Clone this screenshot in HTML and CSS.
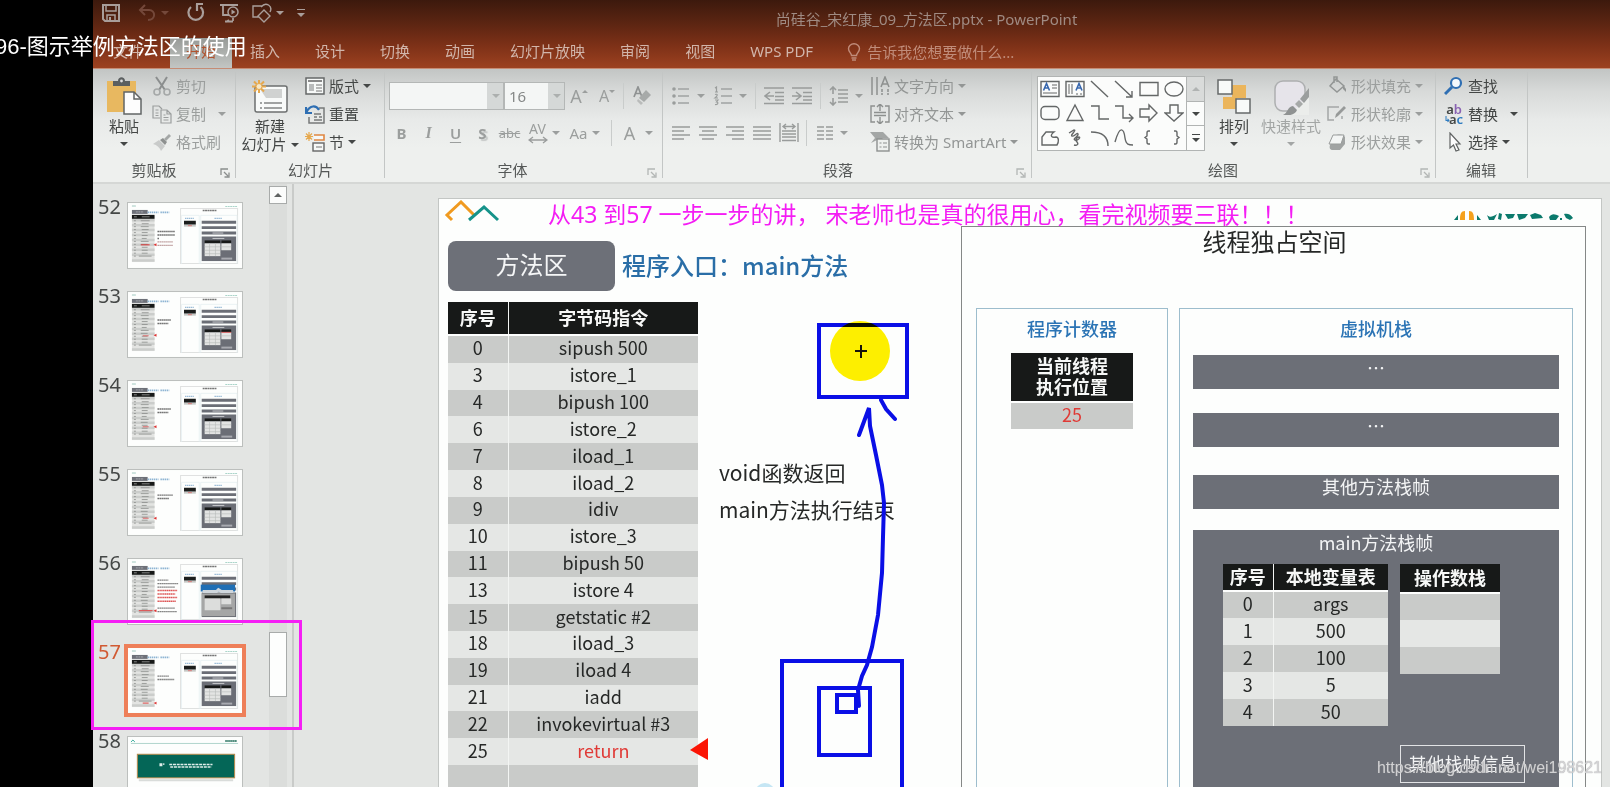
FILE: index.html
```html
<!DOCTYPE html>
<html lang="zh-CN">
<head>
<meta charset="utf-8">
<title>尚硅谷_宋红康_09_方法区.pptx - PowerPoint</title>
<link rel="stylesheet" href="styles.css">
</head>
<body>
<svg class="defs" aria-hidden="true">
  <symbol id="thumb" viewBox="0 0 116 66">
    <rect width="116" height="66" fill="#fdfefd"/>
    <path d="M4 3h4" stroke="#9fc9bf" stroke-width="1"/><path d="M99 3.500h12" stroke="#a9d4c9" stroke-width="1" stroke-dasharray="2 .5"/>
    <rect x="4" y="7" width="16" height="4" fill="#6d7078"/><path d="M8 9h8" stroke="#a5a7ac" stroke-dasharray="2 .6"/>
    <path d="M20 9.500h11m2 0h9" stroke="#8db4d3" stroke-width="1.600" stroke-dasharray="1.500 .6"/>
    <rect x="4" y="13" width="23" height="47" fill="#e3e4e2"/>
    <path d="M4 17.500h23M4 22.500h23M4 27.500h23M4 32.500h23M4 37.500h23M4 42.500h23M4 47.500h23M4 52.500h23M4 58.500h23" stroke="#cbcdcb" stroke-width="2.500"/>
    <rect x="4" y="12" width="23" height="4" fill="#171918"/><path d="M6 14h3m5 0h8" stroke="#888"/>
    <path d="M6 18h2m5 0h9M6 21h2m6 0h7M6 24h2m5 0h8M6 27h2m6 0h7M6 30h2m6 0h6M6 33h2m6 0h6M6 36h2m6 0h5M6 39h2m5 0h8M6 42h2m5 0h7M6 45h2m6 0h6M6 48h2m6 0h6M6 51h2m6 0h6M6 54h2m3 0h13" stroke="#8a8c8a" stroke-width=".8"/>
    <rect x="53.500" y="5.500" width="58" height="56" fill="none" stroke="#dfe1e0"/>
    <path d="M76 7.500h14" stroke="#777" stroke-width="1.600" stroke-dasharray="2 .4"/>
    <path d="M54.500 62V12.500h18V62M74 62V12.500h37V62" fill="none" stroke="#e2ecef" stroke-width=".7"/>
    <path d="M58 15.500h9M88 15.500h8" stroke="#7fa9cc" stroke-dasharray="1.500 .5"/>
    <rect x="57" y="18" width="12" height="4" fill="#1b1d1c"/><rect x="57" y="22" width="12" height="2" fill="#c6c8c6"/><path d="M61 23h4" stroke="#d66" stroke-width=".8"/>
    <path d="M75 19.500h35M75 25h35M75 30.500h35" stroke="#6b6e76" stroke-width="3"/><path d="M86 30.500h11" stroke="#c8c9cc"/>
    <rect x="75" y="34" width="35" height="25" fill="#6b6e76"/><path d="M86 36h12" stroke="#c8c9cc"/>
    <rect x="78" y="38" width="16" height="3" fill="#171918"/><rect x="78" y="41" width="16" height="13" fill="#e3e4e3"/>
    <rect x="95" y="38" width="10" height="3" fill="#171918"/><rect x="95" y="41" width="10" height="7" fill="#e3e4e3"/>
    <path d="M78 44.500h16M78 48h16M78 51.500h16M83 41v13M89 41v13M95 44.500h10" stroke="#b6b8b7" stroke-width=".6"/>
    <rect x="95" y="55.500" width="11" height="2" fill="#a8aab0"/>
  </symbol>
  <symbol id="launch" viewBox="0 0 10 10"><path d="M1 7V1h7M4 4l4 4M9 4.500V9H4.500" fill="none" stroke="currentColor" stroke-width="1.300"/></symbol>
</svg>

<div class="app">
  <header class="titlebar">
    <div class="quick">
      <button aria-label="保存"><svg viewBox="0 0 20 20"><path d="M2 2h16v16H4l-2-2z" fill="none" stroke="currentColor" stroke-width="2"/><path d="M5 2h10v6H5zM6 12h8v6H6z" fill="none" stroke="currentColor" stroke-width="1.500"/><path d="M8 14h2v4H8z" fill="currentColor"/></svg></button>
      <button class="dim" aria-label="撤消"><svg viewBox="0 0 20 20"><path d="M8 2L3 7l5 5M3 7h9c7 0 7 10-1 10" fill="none" stroke="currentColor" stroke-width="2"/></svg><i class="caret"></i></button>
      <button aria-label="重复"><svg viewBox="0 0 20 20"><path d="M5 4a7.300 7.300 0 1 0 9.500 0M10 1h7M11 1v7" fill="none" stroke="currentColor" stroke-width="2.200"/></svg></button>
      <button aria-label="放映"><svg viewBox="0 0 20 20"><path d="M1 2h18M4 2v10h6M10 17l-3 2M6 18.500h8M14 15v3" fill="none" stroke="currentColor" stroke-width="1.800"/><circle cx="14" cy="9" r="5" fill="none" stroke="currentColor" stroke-width="1.500"/><path d="M12.500 6.500l4 2.500-4 2.500z" fill="currentColor"/></svg></button>
      <button aria-label="形状"><svg viewBox="0 0 20 20"><path d="M7 14H1V3h9M12 7l6 6-6 6-6-6zM9 4c5-6 12-1 9 5" fill="none" stroke="currentColor" stroke-width="1.400"/></svg><i class="caret"></i></button>
      <button class="more" aria-label="自定义"><b></b><i class="caret"></i></button>
    </div>
    <h1>尚硅谷_宋红康_09_方法区.pptx - PowerPoint</h1>
    <nav class="tabs">
      <a href="#file" class="file">文件</a><a href="#home" class="on">开始</a><a href="#insert">插入</a><a href="#design">设计</a><a href="#trans">切换</a><a href="#anim">动画</a><a href="#show">幻灯片放映</a><a href="#review">审阅</a><a href="#view">视图</a><a href="#wps">WPS PDF</a>
      <button class="tell"><svg viewBox="0 0 14 18"><path d="M4.500 12.500C4.500 10 1.500 9 1.500 5.800a5.500 5 0 0 1 11 0c0 3.200-3 4.200-3 6.700zM4.500 15h5M5 17h4" fill="none" stroke="currentColor" stroke-width="1.400"/></svg>告诉我您想要做什么...</button>
    </nav>
  </header>

  <section class="ribbon">
    <div class="group g-clip">
      <div class="body">
        <button class="big"><svg viewBox="0 0 36 38"><path d="M1 4h29v31H1z" fill="#e8b860"/><path d="M7 9V4h5c0-5 7-5 7 0h5v5z" fill="#5b5f60"/><circle cx="15.500" cy="4" r="1.400" fill="#ddd"/><path d="M18 15h10l7 7v15H18z" fill="#fdfdfd" stroke="#626566" stroke-width="1.500"/><path d="M28 15v7h7" fill="none" stroke="#626566" stroke-width="1.500"/></svg><span>粘贴</span><i class="caret"></i></button>
        <div class="stack off">
          <button><svg viewBox="0 0 20 20"><path d="M4 1l9 13M15 1L7 14" fill="none" stroke="#8b8e8e" stroke-width="2"/><circle cx="5" cy="16" r="3" fill="none" stroke="#a5a8a8" stroke-width="1.600"/><circle cx="15" cy="16" r="3" fill="none" stroke="#a5a8a8" stroke-width="1.600"/></svg>剪切</button>
          <button class="wide"><svg viewBox="0 0 20 20"><path d="M8 14H1V2h6l3 3M9 6h6l4 4v9H9zM15 6v4h4M3.500 6h3M3.500 9h3M3.500 11.500h3M11.500 11h2M11.500 13.500h5M11.500 16h5" fill="none" stroke="#9b9e9e" stroke-width="1.200"/></svg>复制<i class="caret"></i></button>
          <button><svg viewBox="0 0 20 20"><path d="M1 12l6-4 6 6-4 5c-1-3-4-6-8-7z" fill="#c9cbca"/><path d="M8 8l3-2 4 4-2 3z" fill="#8e9190"/><path d="M12 7l5-5 2 2-5 5z" fill="#a4a7a6"/></svg>格式刷</button>
        </div>
      </div>
      <div class="label">剪贴板<button aria-label="剪贴板选项" class="launch"><svg><use href="#launch"/></svg></button></div>
    </div>

    <div class="group g-slides">
      <div class="body">
        <button class="big"><svg viewBox="0 0 36 38"><rect x="3" y="9" width="32" height="26" rx="2" fill="#f8faf9" stroke="#6c6f6f" stroke-width="1.500"/><path d="M8 12h22v9H14" fill="#d0d2d1"/><path d="M8 26h2m2 0h18M8 31h2m2 0h18" stroke="#828585" stroke-width="1.500"/><path d="M7 3v13M0 9.500h14M2 4.500l10 10M12 4.500l-10 10" stroke="#e6a84d" stroke-width="2"/><circle cx="7" cy="9.500" r="3" fill="#f5e8c9" stroke="#e6a84d"/></svg><span>新建<br>幻灯片<i class="caret"></i></span></button>
        <div class="stack">
          <button><svg viewBox="0 0 20 20"><path d="M1 2h18v16H1z" fill="#f7f9f8" stroke="#656868" stroke-width="1.500"/><path d="M3 5h14" stroke="#888" stroke-width="2"/><path d="M4 8h5v7H4z" fill="#b9bbbb"/><path d="M11 9h6M11 12h6M11 15h6" stroke="#777"/></svg>版式<i class="caret"></i></button>
          <button><svg viewBox="0 0 20 20"><path d="M14 4h5v15H4v-6M9 10h7M9 13h3M14 13h3M9 16h8" fill="none" stroke="#777a7a" stroke-width="1.500"/><path d="M1 3v6h6M1.500 8C5 1 11 1 14 6" fill="none" stroke="#2f6fb3" stroke-width="2.200"/></svg>重置</button>
          <button><svg viewBox="0 0 20 20"><path d="M9 3h10v5H9" fill="#f6f8f7" stroke="#e08642" stroke-width="1.600"/><rect x="8" y="11" width="11" height="8" fill="#f6f8f7" stroke="#666" stroke-width="1.400"/><path d="M11 15h6" stroke="#777"/><path d="M4 0v9M0 4.500h8M1 1.500l6 6M7 1.500l-6 6" stroke="#e6a84d" stroke-width="1.200"/></svg>节<i class="caret"></i></button>
        </div>
      </div>
      <div class="label">幻灯片</div>
    </div>

    <div class="group g-font">
      <div class="body rows off">
        <div class="row r-font">
          <label class="combo face"><select aria-label="字体"><option></option></select><i class="caret"></i></label>
          <label class="combo size"><select aria-label="字号"><option>16</option></select><i class="caret"></i></label>
          <button class="w28 grow-a" aria-label="增大字号">A<i class="up"></i></button>
          <button class="w28 shrink-a" aria-label="减小字号">A<i class="caret"></i></button>
          <hr>
          <button class="w28" aria-label="清除格式"><svg viewBox="0 0 20 20"><path d="M2 11L6 1l4 10M3.500 7.500h5" fill="none" stroke="#8f9292" stroke-width="1.700"/><path d="M7 12l7-8 5 5-7 7z" fill="#a7aaa9"/><path d="M6 13l5 4-2 2-4-4z" fill="#b9bbba"/></svg></button>
        </div>
        <div class="row r-style">
          <button class="w27"><b>B</b></button><button class="w27 ital">I</button><button class="w27 und">U</button><button class="w27 shad">S</button><button class="w27 strike">abc</button>
          <button class="w41"><span class="av">AV<svg viewBox="0 0 20 8"><path d="M5 1L1 4l4 3M15 1l4 3-4 3M1 4h18" fill="none" stroke="#9a9d9c" stroke-width="1.300"/></svg></span><i class="caret"></i></button>
          <button class="w41 aa">Aa<i class="caret"></i></button>
          <hr>
          <button class="w41 color">A<i class="caret"></i></button>
        </div>
      </div>
      <div class="label">字体<button aria-label="字体选项" class="launch"><svg><use href="#launch"/></svg></button></div>
    </div>

    <div class="group g-para">
      <div class="body off">
        <div class="rows">
          <div class="row gap8">
            <button aria-label="项目符号"><svg viewBox="0 0 20 20"><path d="M7 3h11M7 10h11M7 17h11" stroke="#a0a3a2" stroke-width="1.600"/><circle cx="3" cy="3" r="1.800"/><circle cx="3" cy="10" r="1.800"/><circle cx="3" cy="17" r="1.800"/></svg><i class="caret"></i></button>
            <button aria-label="编号"><svg viewBox="0 0 20 20"><path d="M8 3h11M8 10h11M8 17h11" stroke="#a0a3a2" stroke-width="1.600"/><path d="M2 2l1.500-1v5M2 6h3M2 8.500c3-1 3 1 0 3.500h3M2 14h3l-1.500 2c2 0 2 3-1.500 2.500" fill="none" stroke="#9a9d9c" stroke-width="1.200"/></svg><i class="caret"></i></button>
            <hr>
            <button aria-label="减少缩进"><svg viewBox="0 0 20 20"><path d="M0 2h20M11 6.500h9M11 10.500h9M0 17.500h20M11 14h9M6 6l-5 4 5 4M1 10h9" fill="none" stroke="#999c9b" stroke-width="1.600"/></svg></button>
            <button aria-label="增加缩进"><svg viewBox="0 0 20 20"><path d="M0 2h20M11 6.500h9M11 10.500h9M0 17.500h20M11 14h9M4 6l5 4-5 4M0 10h9" fill="none" stroke="#999c9b" stroke-width="1.600"/></svg></button>
            <hr>
            <button aria-label="行距"><svg viewBox="0 0 20 20"><path d="M9 4h10M9 8h10M9 12h10M9 16h10M4 1v7M4 12v7M1 4l3-3 3 3M1 16l3 3 3-3" fill="none" stroke="#999c9b" stroke-width="1.600"/></svg><i class="caret"></i></button>
          </div>
          <div class="row gap7">
            <button aria-label="左对齐"><svg viewBox="0 0 20 20"><path d="M1 4h18M1 8h12M1 12h18M1 16h12" stroke="#999c9b" stroke-width="1.600"/></svg></button>
            <button aria-label="居中"><svg viewBox="0 0 20 20"><path d="M1 4h18M4 8h12M1 12h18M4 16h12" stroke="#999c9b" stroke-width="1.600"/></svg></button>
            <button aria-label="右对齐"><svg viewBox="0 0 20 20"><path d="M1 4h18M7 8h12M1 12h18M7 16h12" stroke="#999c9b" stroke-width="1.600"/></svg></button>
            <button aria-label="两端对齐"><svg viewBox="0 0 20 20"><path d="M1 4h18M1 8h18M1 12h18M1 16h18" stroke="#999c9b" stroke-width="1.600"/></svg></button>
            <button aria-label="分散对齐"><svg viewBox="0 0 20 20"><path d="M1 0v19M19 0v19M3 8h14M3 11h14M3 14h14M3 17.500h14M7 1L4 3.500 7 6M13 1l3 2.500L13 6M4 3.500h12" fill="none" stroke="#999c9b" stroke-width="1.400"/></svg></button>
            <hr>
            <button aria-label="分栏"><svg viewBox="0 0 20 20"><path d="M3 4h7M12 4h7M3 8h7M12 8h7M3 12h7M12 12h7M3 16h7M12 16h7" stroke="#999c9b" stroke-width="1.500"/></svg><i class="caret"></i></button>
          </div>
        </div>
        <div class="stack mid">
          <button><svg viewBox="0 0 20 20"><path d="M2 1v18M7 1v18M12 13v3M18 13v3M12 17v2M18 17v2M11 11l4-10 4 10M12 8h6" fill="none" stroke="#8d908f" stroke-width="1.500"/></svg>文字方向<i class="caret"></i></button>
          <button><svg viewBox="0 0 20 20"><path d="M5 2H1v16h4M15 2h4v16h-4M4 8.500h12M4 11.500h12M10 0v7M10 13v7M7 3l3-3 3 3M7 17l3 3 3-3" fill="none" stroke="#8d908f" stroke-width="1.400"/></svg>对齐文本<i class="caret"></i></button>
          <button><svg viewBox="0 0 20 20"><path d="M0 0h13l6 6h-6l-2 2H7L1 11l4-5z" fill="#a3a6a5"/><rect x="7" y="7" width="12" height="12" fill="#eef0ee" stroke="#8d908f" stroke-width="1.400"/><path d="M9.500 11h2M13 11h4M9.500 15h2M13 15h4" stroke="#8d908f"/></svg>转换为 SmartArt<i class="caret"></i></button>
        </div>
      </div>
      <div class="label">段落<button aria-label="段落选项" class="launch"><svg><use href="#launch"/></svg></button></div>
    </div>

    <div class="group g-draw">
      <div class="body">
        <div class="gallery">
          <div class="shapes">
            <button aria-label="文本框"><svg viewBox="0 0 20 20"><path d="M1 2.500h18v15H1z"/><path d="M12 6h5M12 9h5M3 14h14" stroke-width="1"/><path d="M3.500 11.500l3-7 3 7M4.500 9h4" class="ink"/></svg></button>
            <button aria-label="竖排文本框"><svg viewBox="0 0 20 20"><path d="M1 2.500h18v15H1z"/><path d="M4 5v10M7 5v10M12 14v2M16 14v2" stroke-width="1"/><path d="M11 11.500l3-7 3 7M12 9h4" class="ink"/></svg></button>
            <button aria-label="直线"><svg viewBox="0 0 20 20"><path d="M1 2l17 16"/></svg></button>
            <button aria-label="箭头"><svg viewBox="0 0 20 20"><path d="M1 2l17 16M18 12v6h-6"/></svg></button>
            <button aria-label="矩形"><svg viewBox="0 0 20 20"><path d="M1 3.500h18v13H1z"/></svg></button>
            <button aria-label="椭圆"><svg viewBox="0 0 20 20"><ellipse cx="10" cy="10" rx="9" ry="7"/></svg></button>
            <button aria-label="圆角矩形"><svg viewBox="0 0 20 20"><rect x="1" y="3.500" width="18" height="13" rx="4"/></svg></button>
            <button aria-label="三角形"><svg viewBox="0 0 20 20"><path d="M10 2l8 15.500H2z"/></svg></button>
            <button aria-label="肘形连接符"><svg viewBox="0 0 20 20"><path d="M1 3h8v13h10"/></svg></button>
            <button aria-label="肘形箭头"><svg viewBox="0 0 20 20"><path d="M1 3h8v12h10M15 11l4 4-4 4"/></svg></button>
            <button aria-label="右箭头"><svg viewBox="0 0 20 20"><path d="M1 6h9V2l8 8-8 8v-4H1z"/></svg></button>
            <button aria-label="下箭头"><svg viewBox="0 0 20 20"><path d="M6 2h8v8h5l-9 8-9-8h5z"/></svg></button>
            <button aria-label="任意多边形"><svg viewBox="0 0 20 20"><path d="M2 17V9l4-5h8c-5 4-2 6 2 5 3 0 3 5 1 8z"/></svg></button>
            <button aria-label="自由曲线"><svg viewBox="0 0 20 20"><path d="M4 5l5-3c3 0-4 5-2 6s5-4 6-2-6 5-3 6 6-3 4-3-4 3-2 5 0 4-3 3"/></svg></button>
            <button aria-label="弧形"><svg viewBox="0 0 20 20"><path d="M1 4c10 0 17 4 17 14"/></svg></button>
            <button aria-label="曲线"><svg viewBox="0 0 20 20"><path d="M1 14C6-4 10 1 11 10c1 7 4 7 8 7"/></svg></button>
            <button aria-label="左大括号"><svg viewBox="0 0 20 20"><path d="M11 3H9.500Q8 3 8 5v3L6 9.500 8 11v3q0 2 1.500 2H11"/></svg></button>
            <button aria-label="右大括号"><svg viewBox="0 0 20 20"><path d="M10 3h1.500Q13 3 13 5v3l2 1.500-2 1.500v3q0 2-1.500 2H10"/></svg></button>
          </div>
          <div class="scroll"><button aria-label="上" class="dis"><i class="up"></i></button><button aria-label="下"><i class="caret"></i></button><button aria-label="更多"><b></b><i class="caret"></i></button></div>
        </div>
        <button class="big"><svg viewBox="0 0 36 38"><path d="M16 8h14v13h-9v11H7V20h9z" fill="#ebb55c"/><path d="M2 3h14v14H2zM20 22h14v14H20z" fill="#f8faf9" stroke="#66696a" stroke-width="1.500"/></svg><span>排列</span><i class="caret"></i></button>
        <button class="big quickstyle"><svg viewBox="0 0 36 38"><rect x="2" y="4" width="30" height="30" rx="8" fill="#e6e4ea" stroke="#adafb0" stroke-width="1.500"/><path d="M17 38l19-20v20z" fill="#ebedeb"/><path d="M36 11v9l-5 6-4-4z" fill="#9b9e9e"/><path d="M26 23l4 4-4 4-4-4z" fill="#a6a9a8"/><path d="M20 29l4 4c-2 5-8 6-14 5 5-2 4-8 10-9z" fill="#8f9292"/></svg><span>快速样式</span><i class="caret"></i></button>
        <div class="stack off">
          <button><svg viewBox="0 0 20 20"><path d="M9 3l8 7-7 6-7-6zM7 7V1h3v5" fill="none" stroke="#939695" stroke-width="1.500"/><path d="M16 9l3 4v3l-3-3z" fill="#939695"/><path d="M0 19h19" stroke="#dadcdb" stroke-width="3"/></svg>形状填充<i class="caret"></i></button>
          <button><svg viewBox="0 0 20 20"><path d="M12 3H1v13h6M15 12v3" fill="none" stroke="#a4a7a6" stroke-width="1.500"/><path d="M8 14l1-4 8-8 2 2-8 8z" fill="#979a99"/></svg>形状轮廓<i class="caret"></i></button>
          <button><svg viewBox="0 0 20 20"><path d="M3 13l4-9c5-2 9-2 11 1v7l-5 6H6c-3 0-4-2-3-5z" fill="#a1a4a3"/><path d="M2 12l4-9h11l-3 9z" fill="#f3f5f4" stroke="#999c9b"/></svg>形状效果<i class="caret"></i></button>
        </div>
      </div>
      <div class="label">绘图<button aria-label="绘图选项" class="launch"><svg><use href="#launch"/></svg></button></div>
    </div>

    <div class="group g-edit">
      <div class="body">
        <div class="stack">
          <button><svg viewBox="0 0 20 20"><circle cx="12" cy="7" r="5" fill="#f3f8fc" stroke="#2f6fb3" stroke-width="2.200"/><path d="M8 11l-7 7" stroke="#2f6fb3" stroke-width="3"/></svg>查找</button>
          <button class="wide"><span class="abac"><span>a<em>b</em></span><span><small>↳</small>a<strong>c</strong></span></span>替换<i class="caret"></i></button>
          <button><svg viewBox="0 0 20 20"><path d="M6 1v15l3.500-3 2.500 6 3-1-3-6h4z" fill="#fcfcfc" stroke="#606363" stroke-width="1.200"/></svg>选择<i class="caret"></i></button>
        </div>
      </div>
      <div class="label">编辑</div>
    </div>
  </section>

  <main class="workspace">
    <ol class="thumbs">
      <li><span>52</span><button aria-label="幻灯片 52"><svg viewBox="0 0 116 66"><use href="#thumb"/><path d="M30 29h18M30 32.500h18M30 36h2" stroke="#666" stroke-width="1.500" stroke-dasharray="1.500 .5"/><path d="M30 39.500h16M30 43h16" stroke="#b99" stroke-width="1.200" stroke-dasharray="1.500 .5"/><path d="M13 42.500h9" stroke="#d33"/><path d="M26 42.500l3-1.500v3z" fill="#d33"/></svg></button></li>
      <li><span>53</span><button aria-label="幻灯片 53"><svg viewBox="0 0 116 66"><use href="#thumb"/><path d="M30 28.500h14M30 32h11" stroke="#666" stroke-width="1.500" stroke-dasharray="1.500 .5"/><path d="M15 44.500h6M95 41h10" stroke="#d66"/><path d="M26 44l3-1.500v3z" fill="#d33"/></svg></button></li>
      <li><span>54</span><button aria-label="幻灯片 54"><svg viewBox="0 0 116 66"><use href="#thumb"/><path d="M30 28.500h14M30 32h11" stroke="#666" stroke-width="1.500" stroke-dasharray="1.500 .5"/><path d="M15 46.500h6" stroke="#d66"/><path d="M26 46.500l3-1.500v3z" fill="#d33"/></svg></button></li>
      <li><span>55</span><button aria-label="幻灯片 55"><svg viewBox="0 0 116 66"><use href="#thumb"/><path d="M30 25.500h16M30 29h12" stroke="#666" stroke-width="1.500" stroke-dasharray="1.500 .5"/><path d="M15 49h6" stroke="#d66"/><path d="M26 49l3-1.500v3z" fill="#d33"/></svg></button></li>
      <li><span>56</span><button aria-label="幻灯片 56"><svg viewBox="0 0 116 66"><use href="#thumb"/><path d="M30 21.500h11M30 25h21M30 28.500h18M30 50h18M30 53.500h20" stroke="#777" stroke-width="1.300" stroke-dasharray="1.500 .5"/><path d="M30 32h20M30 35.500h18M30 39h20M30 43h19" stroke="#d55" stroke-width="1.500" stroke-dasharray="1.500 .4"/><rect x="74" y="26" width="35" height="7" fill="#1f6fb5"/><path d="M76 33h14l2-2 3 2h12" stroke="#cfd6dc" stroke-width="3" fill="none"/><rect x="75" y="35" width="34" height="23" fill="#a5a6a6"/><path d="M78 38.500h26" stroke="#222" stroke-width="3"/><path d="M78 40h16v12H78zM95 40h10v6H95z" fill="#dcdddc"/><path d="M95 50h11" stroke="#777" stroke-width="2"/><path d="M11 52.500h14" stroke="#d44"/><path d="M26 52.500l3-1.500v3z" fill="#d33"/></svg></button></li>
      <li class="current"><span>57</span><button aria-label="幻灯片 57"><svg viewBox="0 0 116 66"><use href="#thumb"/><path d="M30 28.500h12M30 32h17" stroke="#777" stroke-width="1.400" stroke-dasharray="1.500 .5"/><path d="M15 56h6" stroke="#d44"/><path d="M26 56l3-1.500v3z" fill="#d33"/></svg></button></li>
      <li><span>58</span><button aria-label="幻灯片 58"><svg viewBox="0 0 116 66"><path d="M0 0h116v66H0z" fill="#fdfefd"/><path d="M3 6.500h109" stroke="#9ccabf" stroke-width=".8"/><path d="M3 5l2-2 2 2" fill="none" stroke="#3a9"/><path d="M99 4h12" stroke="#397d6c" stroke-width="2" stroke-dasharray="1.500 .5"/><rect x="9.500" y="17.500" width="99" height="24" fill="#046657" stroke="#b98a4b"/><path d="M11 44h96" stroke="#d9dcda" stroke-width="2"/><path d="M32 27.500h5M32 29h3M42 28h44M43 30.500h42" stroke="#dfeeea" stroke-width="1.600" stroke-dasharray="3 .8"/></svg></button></li>
    </ol>
    <div class="scrollbar"><button aria-label="向上滚动"><i class="up"></i></button><span class="handle"></span></div>

    <div class="stage">
      <article class="slide">
        <section class="left">
          <svg class="logo" viewBox="0 0 56 22"><path d="M8 20l-5-5L17 2l13 13" fill="none" stroke="#f09a20" stroke-width="3"/><path d="M25 20L40 7l14 13" fill="none" stroke="#15938a" stroke-width="3"/></svg>
          <div class="heading"><span class="badge">方法区</span><h2>程序入口：main方法</h2></div>
          <div class="split">
            <table class="grid code">
              <thead><tr><th>序号</th><th>字节码指令</th></tr></thead>
              <tbody>
                <tr><td>0</td><td>sipush 500</td></tr><tr><td>3</td><td>istore_1</td></tr><tr><td>4</td><td>bipush 100</td></tr><tr><td>6</td><td>istore_2</td></tr><tr><td>7</td><td>iload_1</td></tr><tr><td>8</td><td>iload_2</td></tr><tr><td>9</td><td>idiv</td></tr><tr><td>10</td><td>istore_3</td></tr><tr><td>11</td><td>bipush 50</td></tr><tr><td>13</td><td>istore 4</td></tr><tr><td>15</td><td>getstatic #2</td></tr><tr><td>18</td><td>iload_3</td></tr><tr><td>19</td><td>iload 4</td></tr><tr><td>21</td><td>iadd</td></tr><tr><td>22</td><td>invokevirtual #3</td></tr><tr><td>25</td><td class="red">return</td></tr><tr><td></td><td></td></tr>
              </tbody>
            </table>
            <p class="note">void函数返回<br>main方法执行结束</p>
          </div>
        </section>
        <section class="right">
          <svg class="brand" viewBox="0 0 120 10"><path d="M0 9l4-5v5zM23 9V4l4 5z" fill="#0b7a6c"/><path d="M6 9c0-6 1-9 5-9v9zM15 9V0c4 0 5 3 5 9z" fill="#f5a11d"/><path d="M33 4c3 3 5 2 10-1l-3 6h-5zM45 2l3 1-1 6-3-1zM51 3h10l-2 4-5 1zM63 3h11l-3 4-6 2zM76 4l5-2 6 2 2 3-11 1zM95 6c3-4 6-3 10-1l-3 4-6 0zM106 7h2v2h-2zM110 3c3-1 7 0 9 4l-3 2-4-2z" fill="#0b7a6c"/></svg>
          <div class="thread">
            <h2>线程独占空间</h2>
            <div class="areas">
              <div class="area pc">
                <h3>程序计数器</h3>
                <table class="grid now"><thead><tr><th>当前线程<br>执行位置</th></tr></thead><tbody><tr><td class="red">25</td></tr></tbody></table>
              </div>
              <div class="area vm">
                <h3>虚拟机栈</h3>
                <div class="bar">…</div>
                <div class="bar">…</div>
                <div class="bar">其他方法栈帧</div>
                <div class="frame">
                  <h4>main方法栈帧</h4>
                  <div class="tables">
                    <table class="grid locals"><thead><tr><th>序号</th><th>本地变量表</th></tr></thead><tbody><tr><td>0</td><td>args</td></tr><tr><td>1</td><td>500</td></tr><tr><td>2</td><td>100</td></tr><tr><td>3</td><td>5</td></tr><tr><td>4</td><td>50</td></tr></tbody></table>
                    <table class="grid ops"><thead><tr><th>操作数栈</th></tr></thead><tbody><tr><td></td></tr><tr><td></td></tr><tr><td></td></tr></tbody></table>
                  </div>
                  <div class="other">其他栈帧信息</div>
                </div>
              </div>
            </div>
          </div>
        </section>
        <svg class="ink-layer" width="522" height="588" viewBox="439 199 522 588">
          <path d="M690 750l18-12v22z" fill="#fb1505"/>
          <circle cx="765" cy="793" r="10" fill="#c5e6f4"/>
          <g fill="none" stroke="#0a0fe6" stroke-width="4" stroke-linecap="round">
            <path d="M819 325h88v72h-88z"/>
            <path d="M782 800V661h120v139M819 688h51v67h-51zM837 695h19v17h-19z"/>
            <path d="M859 706l-1-16 4-14 5-11 5-18 6-32 4-42 1-36 1-34-2-18-6-30-6-29-1-18-10 27M881 400l5 9 9 10"/>
          </g>
          <circle cx="860" cy="351" r="30" fill="#fff000" class="spot"/>
          <path d="M855 351h12M861 345v13" stroke="#16120a" stroke-width="2"/>
        </svg>
      </article>
    </div>
  </main>
</div>

<p class="video-title">96-图示举例方法区的使用</p>
<p class="caption">从43 到57 一步一步的讲， 宋老师也是真的很用心，看完视频要三联！！！</p>
<div class="marker"></div>
<p class="watermark">https://blog.csdn.net/wei198621</p>
</body>
</html>
```
FILE: styles.css
```css
* { box-sizing: border-box; }
body {
  margin: 0;
  height: 100vh;
  overflow: hidden;
  position: relative;
  background: #000;
  color: #444746;
  font: 15px/20px "Noto Sans", "Noto Sans CJK SC", sans-serif;
}
.defs { position: absolute; width: 0; height: 0; }
h1, h2, h3, h4, p, ol { margin: 0; padding: 0; font-weight: 400; }
button { border: 0; padding: 0; margin: 0; background: none; font: inherit; color: inherit; display: flex; align-items: center; white-space: nowrap; }
svg { display: block; flex: none; }
hr { width: 1px; height: 26px; border: 0; margin: 0; background: #c9cccb; }
.caret, .up { display: block; flex: none; border: 4px solid transparent; border-bottom: 0; border-top-color: currentColor; }
.up { border-top: 0; border-bottom: 4px solid currentColor; }

.app { margin-left: 93px; height: 100vh; display: flex; flex-direction: column; background: #e3e5e3; }

.titlebar {
  position: relative;
  height: 69px;
  flex: none;
  display: flex;
  flex-direction: column;
  justify-content: space-between;
  background: linear-gradient(#3c190d, #5c2512 35%, #7b3017 65%, #9d4120);
  border-bottom: 1px solid #c58c75;
}
.quick { display: flex; height: 26px; padding-left: 8px; align-items: center; color: #a99e9a; }
.quick svg { width: 20px; height: 20px; }
.quick button { margin-right: 13px; gap: 4px; }
.quick button:first-child { margin-right: 16px; }
.quick .dim { color: #74483a; margin-right: 17px; }
.quick .more { flex-direction: column; gap: 3px; }
.more b, .scroll b { width: 8px; height: 1px; background: currentColor; }
.titlebar h1 { position: absolute; top: 9px; left: 0; right: 0; padding-left: 150px; text-align: center; font-size: 15px; color: #9f8a82; }
.tabs { display: flex; height: 30px; padding-left: 20px; align-items: stretch; color: #d1b5aa; }
.tabs a { color: inherit; text-decoration: none; line-height: 26px; margin-right: 35px; }
.tabs .file { margin-right: 27px; }
.tabs .on { background: linear-gradient(#979a97, #c3c6c4); color: #b0532f; padding: 0 16px; margin-right: 18px; }
.tabs a:last-of-type { margin-right: 34px; }
.tell { gap: 6px; height: 28px; color: #c08c7a; }
.tell svg { width: 14px; height: 18px; }

.ribbon { flex: none; display: flex; padding: 3px 0 4px; background: linear-gradient(#c2c5c4, #d8dad9 20%, #e8eae9 45%, #eef0ee 70%); border-bottom: 2px solid #d5d7d5; }
.group { display: flex; flex-direction: column; border-right: 1px solid #c3c6c5; }
.body { height: 84px; display: flex; }
.label { position: relative; height: 22px; line-height: 28px; text-align: center; padding-right: 26px; color: #555857; }
.launch { position: absolute; right: 5px; bottom: 0; color: #8b8e8d; }
.launch svg { width: 10px; height: 10px; }
.g-clip { width: 143px; padding-left: 6px; }
.g-slides { width: 149px; padding-left: 5px; }
.g-slides .label { padding-right: 4px; }
.g-font { width: 278px; padding-left: 4px; }
.g-para { width: 369px; padding-left: 8px; }
.g-draw { width: 404px; padding-left: 5px; }
.g-edit { width: 92px; padding-left: 8px; }
.g-edit .label { padding-right: 9px; }
.off { color: #9b9e9d; }
.g-font .launch, .g-para .launch, .g-draw .launch { color: #b3b6b5; }

.big { width: 50px; flex-direction: column; padding-top: 5px; line-height: 18px; color: #444746; }
.big svg { width: 36px; height: 38px; margin-bottom: 2px; }
.big > .caret { margin-top: 7px; }
.big span .caret { display: inline-block; margin: 0 0 3px 4px; }
.g-slides .big { width: 58px; margin-right: 6px; }
.g-clip .big { margin-right: 3px; }
.g-draw .big { margin-left: 4px; }
.g-draw .quickstyle { width: 62px; margin: 0 5px 0 1px; color: #a3a6a5; }
.stack { display: flex; flex-direction: column; }
.stack button { height: 28px; gap: 4px; }
.stack svg { width: 20px; height: 20px; }
.stack .wide .caret { margin-left: 8px; }
.stack.mid { color: #939695; margin-left: 7px; }

.rows { display: flex; flex-direction: column; gap: 9px; padding-top: 10px; }
.row { display: flex; align-items: center; height: 28px; }
.row svg { width: 20px; height: 20px; fill: #9a9d9c; }
.row button { justify-content: center; }
.gap8 { gap: 8px; }
.gap7 { gap: 7px; }
.gap8 button, .gap7 button { gap: 6px; }
.combo { position: relative; }
.combo select { appearance: none; width: 100%; height: 28px; margin: 0; padding: 0 4px; border: 1px solid #b4b7b6; border-radius: 0; background: linear-gradient(to left, #d5d8d7 16px, #f4f6f5 16px); color: #858887; font: inherit; display: block; }
.combo .caret { position: absolute; right: 4px; top: 12px; color: #acafae; }
.face { width: 115px; }
.size { width: 61px; }
.w28 { width: 28px; }
.w27 { width: 27px; }
.w41 { width: 41px; gap: 4px; }
.r-font hr { margin: 0 4px 0 2px; }
.r-style { margin-left: -1px; }
.r-style hr { margin: 0 6px; }
.grow-a, .shrink-a { font-size: 18px; }
.shrink-a { font-size: 16px; }
.grow-a .up, .shrink-a .caret { align-self: flex-start; margin-top: 4px; border-width: 3px; }
.grow-a .up { border-top: 0; }
.shrink-a .caret { border-bottom: 0; }
.ital { font: italic 16px/20px "Liberation Serif", serif; font-weight: 700; }
.und { text-decoration: underline; font-weight: 600; text-underline-offset: 3px; }
.shad { font-weight: 700; text-shadow: 2px 2px 1px #c6c9c8; }
.strike { text-decoration: line-through; font-size: 13px; }
.av { font-size: 14px; line-height: 14px; }
.av svg { width: 20px; height: 8px; }
.color { font-size: 18px; gap: 10px; }

.gallery { display: flex; width: 168px; height: 75px; margin-top: 4px; border: 1px solid #b1b4b3; background: #fbfcfb; }
.shapes { flex: 1; display: grid; grid-template-columns: repeat(6, 1fr); }
.shapes button { justify-content: center; }
.shapes svg { width: 20px; height: 20px; fill: none; stroke: #646767; stroke-width: 1.4; }
.shapes .ink { stroke: #3767ae; stroke-width: 1.6; }
.scroll { width: 18px; display: flex; flex-direction: column; border-left: 1px solid #b1b4b3; }
.scroll button { flex: 1; flex-direction: column; gap: 3px; justify-content: center; }
.scroll button + button { border-top: 1px solid #b1b4b3; }
.scroll .dis { background: #d9dbda; color: #b0b3b2; }
.abac { width: 20px; font-size: 13px; line-height: 10px; font-weight: 600; display: flex; flex-direction: column; }
.abac span + span { display: flex; }
.abac em { font-style: normal; color: #8a63b3; }
.abac strong { color: #2f7cc0; font-weight: 600; }
.abac small { font-size: 8px; color: #2f7cc0; width: 5px; }

.workspace { flex: 1; min-height: 0; display: flex; overflow: hidden; }
.thumbs { list-style: none; width: 176px; padding: 18px 0 0 4px; }
.thumbs li { display: flex; height: 89px; }
.thumbs span { width: 30px; padding-left: 1px; font-size: 20px; line-height: 10px; }
.thumbs button { width: 116px; height: 67px; border: 1px solid #bcbfbd; }
.thumbs button svg { width: 114px; height: 65px; }
.thumbs .current span { color: #d15a33; }
.current button { outline: 3px solid #ee7f59; border-color: #ee7f59; }
.scrollbar { width: 18px; padding-top: 2px; background: #dbdddb; display: flex; flex-direction: column; }
.scrollbar button { height: 18px; justify-content: center; border: 1px solid #a8abaa; background: #fbfcfb; color: #606362; }
.handle { height: 65px; margin-top: 428px; border: 1px solid #a8abaa; background: #fdfefd; }
.stage { flex: 1; display: flex; margin-left: 5px; padding: 14px 8px 0 144px; border-left: 2px solid #c9cbc9; }

.slide { position: relative; flex: 1; display: flex; border: 1px solid #c3c6c4; border-bottom: 0; background: #fdfefd; color: #262827; font-family: "Noto Sans CJK SC", sans-serif; font-size: 18px; line-height: 24px; }
.left { width: 522px; padding: 1px 0 0 9px; }
.logo { width: 56px; height: 22px; margin-left: -4px; }
.heading { display: flex; align-items: center; gap: 7px; margin-top: 19px; font-size: 24px; }
.badge { width: 167px; height: 50px; line-height: 46px; text-align: center; border-radius: 8px; background: #6d7078; color: #f5f6f7; }
.heading h2 { font-size: 24px; font-weight: 500; padding-bottom: 2px; color: #2a6ea7; }
.split { display: flex; align-items: flex-start; gap: 21px; margin-top: 11px; }
.note { padding-top: 152px; font-size: 21px; line-height: 37px; white-space: nowrap; }

.grid { border-collapse: collapse; text-align: center; table-layout: fixed; flex: none; }
.grid th { background: #171918; color: #f7f8f7; font-weight: 700; padding: 0 0 2px; border-bottom: 2px solid #fdfefd; }
.grid td { padding: 0 0 3px; height: 27px; line-height: 23px; }
.grid th + th, .grid td + td { border-left: 1px solid #f3f5f3; }
.grid tbody tr:nth-child(odd) { background: #c9cbc9; }
.grid tbody tr:nth-child(even) { background: #e5e7e5; }
.grid td.red, .red { color: #e03a36; }
.code { width: 250px; height: 490px; }
.code th { height: 33px; }
.code th:first-child { width: 60px; }
.code td { height: 26px; }

.right { flex: 1; padding: 12px 15px 0 0; display: flex; flex-direction: column; }
.brand { width: 120px; height: 10px; align-self: flex-end; margin-right: 12px; }
.thread { flex: 1; margin-top: 5px; padding: 0 12px 0 14px; border: 1px solid #858887; border-bottom: 0; display: flex; flex-direction: column; }
.thread h2 { font-size: 24px; line-height: 28px; text-align: center; }
.areas { flex: 1; display: flex; gap: 11px; margin-top: 53px; }
.area { border: 1px solid #9dbdcd; border-bottom: 0; }
.area h3 { font-size: 18px; line-height: 24px; margin-top: 7px; font-weight: 500; text-align: center; color: #2b74b5; }
.pc { width: 192px; }
.now { width: 122px; margin: 13px auto 0; }
.now th { padding: 2px 0 4px; line-height: 21px; }
.now td { height: 26px; }
.vm { flex: 1; padding: 0 13px; }
.bar { height: 34px; line-height: 24px; background: #6c6f77; color: #f3f4f5; text-align: center; margin-top: 24px; }
h3 + .bar { margin-top: 15px; }
.bar:nth-of-type(3) { margin-top: 28px; line-height: 22px; }
.frame { height: 300px; margin-top: 21px; padding: 0 0 0 30px; background: #6c6f77; color: #f3f4f5; }
.frame h4 { font-size: 18px; line-height: 24px; margin-right: 30px; text-align: center; }
.tables { display: flex; align-items: flex-start; gap: 12px; margin-top: 10px; color: #262827; }
.locals { width: 165px; }
.locals th:first-child { width: 50px; }
.ops { width: 100px; }
.frame th { height: 27px; }
.frame .ops th { height: 29px; }
.other { width: 125px; height: 38px; margin: 19px 0 0 177px; border: 1px solid #e2e3e5; line-height: 34px; text-align: center; }
.ink-layer { position: absolute; left: 0; top: 0; overflow: visible; }
.spot { mix-blend-mode: multiply; }

.video-title { position: absolute; left: -5px; top: 34px; color: #fff; font: 22px/26px "Liberation Sans", "Noto Sans CJK SC", sans-serif; white-space: nowrap; }
.caption { position: absolute; left: 548px; top: 199px; color: #f41df4; font-size: 23px; line-height: 30px; white-space: nowrap; }
.marker { position: absolute; left: 91px; top: 620px; width: 211px; height: 110px; border: 3px solid #f51ef5; }
.watermark { position: absolute; right: 8px; top: 758px; color: rgba(222, 222, 224, .85); text-shadow: 0 0 1px #8a8a8a; font: 16px/20px "Liberation Sans", sans-serif; }
```
